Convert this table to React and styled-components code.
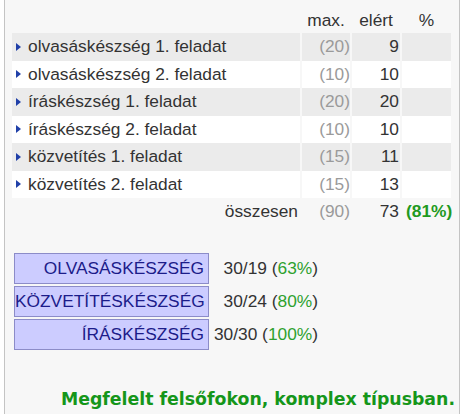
import React from "react";
import styled, { createGlobalStyle } from "styled-components";

const tasks = [
  { name: "olvasáskészség 1. feladat", max: 20, got: 9 },
  { name: "olvasáskészség 2. feladat", max: 10, got: 10 },
  { name: "íráskészség 1. feladat", max: 20, got: 20 },
  { name: "íráskészség 2. feladat", max: 10, got: 10 },
  { name: "közvetítés 1. feladat", max: 15, got: 11 },
  { name: "közvetítés 2. feladat", max: 15, got: 13 },
];

const skills = [
  { name: "OLVASÁSKÉSZSÉG", score: "30/19", pct: "63%" },
  { name: "KÖZVETÍTÉSKÉSZSÉG", score: "30/24", pct: "80%" },
  { name: "ÍRÁSKÉSZSÉG", score: "30/30", pct: "100%" },
];

const App = () => {
  return (
    <>
      <GlobalStyle />
      <Frame>
        <ScoreTable>
          <Row>
            <Cell />
            <HeadCell>max.</HeadCell>
            <HeadCell>elért</HeadCell>
            <HeadCell>%</HeadCell>
          </Row>
          {tasks.map((t, i) => (
            <Row key={t.name} $shade={i % 2 === 0}>
              <LabelCell>
                <Arrow />
                {t.name}
              </LabelCell>
              <MaxCell>({t.max})</MaxCell>
              <ScoreCell>{t.got}</ScoreCell>
              <Cell />
            </Row>
          ))}
          <Row>
            <TotalLabel>összesen</TotalLabel>
            <MaxCell>(90)</MaxCell>
            <ScoreCell>73</ScoreCell>
            <PercentCell>(81%)</PercentCell>
          </Row>
        </ScoreTable>

        <SkillList>
          {skills.map((s) => (
            <SkillRow key={s.name}>
              <SkillBox>{s.name}</SkillBox>
              <SkillResult>
                {s.score} (<Green>{s.pct}</Green>)
              </SkillResult>
            </SkillRow>
          ))}
        </SkillList>

        <Verdict>Megfelelt felsőfokon, komplex típusban.</Verdict>
      </Frame>
    </>
  );
};

export default App;

const GlobalStyle = createGlobalStyle`
  body {
    margin: 0;
    background: #ffffff;
    font-family: "Liberation Sans", Arial, sans-serif;
  }
`;

const Frame = styled.div`
  margin-left: 4px;
  width: 456px;
  min-height: 414px;
  box-sizing: border-box;
  border-left: 1px solid #c4c4c4;
  border-right: 1px solid #c4c4c4;
  background: #f7f7f7;
  padding: 7px 0 0 7px;
  font-size: 17.33px;
  color: #333333;
`;

const ScoreTable = styled.div`
  display: flex;
  flex-direction: column;
`;

const Row = styled.div`
  display: grid;
  grid-template-columns: 288px 48px 48px 49px;
  column-gap: 2px;
  height: 27.5px;
  line-height: 27.5px;
  white-space: nowrap;

  &:first-child {
    height: 26px;
    line-height: 26px;
  }

  & > div {
    background: ${(p) => (p.$shade === undefined ? "transparent" : p.$shade ? "#ebebeb" : "#ffffff")};
  }
`;

const Cell = styled.div``;

const HeadCell = styled.div`
  text-align: center;
`;

const LabelCell = styled.div`
  display: flex;
  align-items: center;
  padding-left: 4px;
`;

const Arrow = styled.span`
  width: 0;
  height: 0;
  border-left: 5px solid #2040a8;
  border-top: 4.5px solid transparent;
  border-bottom: 4.5px solid transparent;
  margin-right: 7px;
`;

const MaxCell = styled.div`
  text-align: right;
  color: #9a9a9a;
`;

const ScoreCell = styled.div`
  text-align: right;
  padding-right: 1px;
`;

const TotalLabel = styled.div`
  text-align: right;
  padding-right: 2px;
`;

const PercentCell = styled.div`
  padding-left: 4px;
  font-weight: bold;
  color: #1f9a1f;
  overflow: visible;
`;

const SkillList = styled.div`
  margin: 27px 0 0 2px;
  display: flex;
  flex-direction: column;
  gap: 2.3px;
`;

const SkillRow = styled.div`
  display: grid;
  grid-template-columns: 195px 109px;
  align-items: center;
  white-space: nowrap;
`;

const SkillBox = styled.div`
  height: 31px;
  box-sizing: border-box;
  border: 1px solid #8c8cc8;
  background: #ccccff;
  color: #1c1c8a;
  text-align: right;
  line-height: 29px;
  padding-right: 4px;
  direction: rtl;
  unicode-bidi: plaintext;
`;

const SkillResult = styled.div`
  text-align: right;
  line-height: 31px;
`;

const Green = styled.span`
  color: #2ea12e;
`;

const Verdict = styled.div`
  margin-top: 39px;
  padding-right: 4px;
  text-align: right;
  font-family: "DejaVu Sans", Verdana, sans-serif;
  font-weight: bold;
  font-size: 17.33px;
  line-height: 20px;
  color: #15961a;
`;
